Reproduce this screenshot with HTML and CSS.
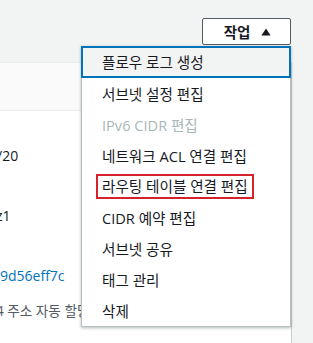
FILE: index.html
```html
<!DOCTYPE html>
<html lang="ko">
<head>
  <meta charset="UTF-8">
  <title>서브넷 작업</title>
  <link rel="stylesheet" href="styles.css">
</head>
<body>

  <div class="topbar">
    <div class="actions">
      <button class="btn">
        <span>작업</span>
        <svg class="caret" width="10" height="8" viewBox="0 0 10 8"><path d="M5 0.5 L9.6 7.5 L0.4 7.5 Z" fill="#16191f"/></svg>
      </button>

      <ul class="menu">
        <li class="item focused">플로우 로그 생성</li>
        <li class="item">서브넷 설정 편집</li>
        <li class="item disabled">IPv6 CIDR 편집</li>
        <li class="item">네트워크 ACL 연결 편집</li>
        <li class="item"><span class="marked">라우팅 테이블 연결 편집</span></li>
        <li class="item">CIDR 예약 편집</li>
        <li class="item">서브넷 공유</li>
        <li class="item">태그 관리</li>
        <li class="item">삭제</li>
      </ul>
    </div>
  </div>

  <div class="panel">
    <div class="panel-head"></div>
    <div class="panel-body">
      <div class="value cidr">/20</div>
      <div class="value az">z1</div>
      <div class="value link">9d56eff7c</div>
      <div class="label">4 주소 자동 할당</div>
    </div>
  </div>

</body>
</html>
```

FILE: styles.css
```css
body {
  margin: 0;
  background-color: #f2f3f3;
  color: #16191f;
  font-family: 'Open Sans', 'Noto Sans CJK KR', sans-serif;
  font-size: 14px;
}
.topbar {
  height: 62px;
  box-sizing: border-box;
  padding: 18px 22px 0 0;
  display: flex;
  justify-content: flex-end;
  align-items: flex-start;
}
.actions {
  position: relative;
}
.btn {
  width: 89px;
  height: 27px;
  box-sizing: border-box;
  display: flex;
  align-items: center;
  justify-content: center;
  gap: 11px;
  padding: 0 0 0 2px;
  background-color: #fff;
  border: 1px solid #545b64;
  border-radius: 2px;
  font-family: inherit;
  font-size: 14.5px;
  font-weight: 700;
  color: #16191f;
}
.caret {
  display: block;
}
.menu {
  position: absolute;
  top: 28px;
  right: 0;
  z-index: 2;
  width: 210px;
  box-sizing: border-box;
  margin: 0;
  padding: 0;
  list-style: none;
  background-color: #fff;
  border: 1px solid #b8bfc0;
  box-shadow: 0 1px 3px rgba(0, 28, 36, 0.3);
}
.item {
  height: 31px;
  display: flex;
  align-items: center;
  padding-left: 20px;
  white-space: nowrap;
  font-size: 14.6px;
  line-height: 20px;
}
.focused {
  height: 32px;
  box-sizing: border-box;
  margin: -1px -1px 0 -1px;
  padding-left: 19px;
  background-color: #f2f3f3;
  border: 2px solid #0073bb;
}
.disabled {
  color: #aab7b8;
}
.marked {
  display: inline-block;
  margin-left: -6px;
  padding: 0 4px;
  line-height: 21px;
  border: 2px solid #d6232b;
}
.panel {
  width: 292px;
  box-sizing: border-box;
  height: 281px;
  overflow: hidden;
  background-color: #fff;
  border-top: 1px solid #eaeded;
  border-right: 1px solid #c9cece;
}
.panel-head {
  height: 47px;
  background-color: #fafafa;
  border-bottom: 1px solid #eaeded;
}
.panel-body {
  padding-top: 35px;
}
.value {
  height: 20px;
  line-height: 20px;
  margin-bottom: 40px;
  white-space: nowrap;
}
.cidr {
  margin-left: -3px;
}
.az {
  margin-left: -4px;
}
.link {
  color: #0073bb;
  margin-bottom: 15px;
}
.label {
  margin-left: -4px;
  line-height: 20px;
  font-size: 13.6px;
  color: #545b64;
  white-space: nowrap;
}
```
